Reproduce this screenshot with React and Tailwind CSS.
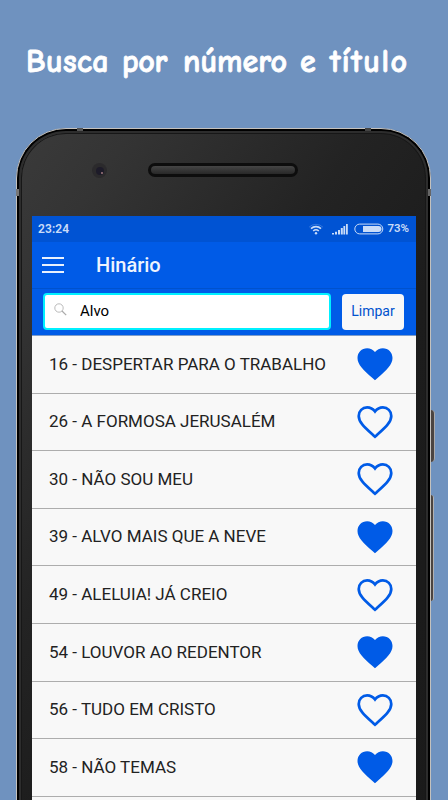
import React, { useState } from "react";
import { MdFavorite } from "react-icons/md";

const hymns = [
    { number: 16, title: "DESPERTAR PARA O TRABALHO", favorite: true },
    { number: 26, title: "A FORMOSA JERUSALÉM", favorite: false },
    { number: 30, title: "NÃO SOU MEU", favorite: false },
    { number: 39, title: "ALVO MAIS QUE A NEVE", favorite: true },
    { number: 49, title: "ALELUIA! JÁ CREIO", favorite: false },
    { number: 54, title: "LOUVOR AO REDENTOR", favorite: true },
    { number: 56, title: "TUDO EM CRISTO", favorite: false },
    { number: 58, title: "NÃO TEMAS", favorite: true },
]

function HeartOutline() {
    return (
        <svg className="h-[42px] w-[42px]" viewBox="0 0 24 24" fill="none" stroke="#005be7" strokeWidth="1.55">
            <path d="M12 20.420l-1.300-1.170C6.050 15.030 2.700 12.100 2.700 8.500c0-2.700 2.100-4.800 4.800-4.800 1.740 0 3.410.9 4.500 2.300 1.090-1.400 2.760-2.300 4.500-2.300 2.700 0 4.800 2.100 4.800 4.800 0 3.600-3.350 6.530-8 10.750z" />
        </svg>
    )
}

function StatusBar() {
    return (
        <div className="flex h-[26px] items-center bg-[#0053d3] pl-[6px] pr-[7px] text-[#c9dcf8]">
            <span className="text-[12px] font-semibold tracking-[0.1px]">23:24</span>
            <svg className="ml-auto" width="16" height="12" viewBox="0 0 16 12" fill="none" stroke="currentColor">
                <path d="M1 4.2a10 10 0 0 1 14 0" strokeWidth="1" opacity="0.25" />
                <path d="M3 5.6a7.3 7.3 0 0 1 10 0" strokeWidth="1.6" />
                <path d="M5.2 8a4.2 4.2 0 0 1 5.6 0" strokeWidth="1.6" />
                <circle cx="8" cy="10.3" r="1.2" fill="currentColor" stroke="none" />
            </svg>
            <svg className="ml-[8px]" width="16" height="12" viewBox="0 0 16 12" fill="currentColor">
                <path d="M0 10h2v1.5H0zM3 8.7h2v2.8H3zM6 7h2v4.5H6zM8.8 5h2v6.5h-2zM11.4 3h1.8v8.5h-1.8zM14 1h1.8v10.5H14z" />
            </svg>
            <svg className="ml-[6px]" width="30" height="12" viewBox="0 0 30 12" fill="none" stroke="currentColor">
                <rect x="0.8" y="1.1" width="28" height="9.8" rx="4.9" strokeWidth="1" />
                <path d="M9 3h15.500a3 3 0 0 1 0 6H9z" fill="currentColor" stroke="none" />
            </svg>
            <span className="ml-[3px] text-[11.500px] font-semibold">73%</span>
        </div>
    )
}

function App() {

    const [ search, setSearch ] = useState("Alvo");

    return (
        <main className="h-[800px] w-[448px] overflow-hidden bg-[#6f92bf]">
            <h1 className="flex h-[128px] gap-[15px] whitespace-nowrap pl-[26px] pt-[38px] font-['Comic_Sans_MS','Comic_Neue','Open_Sans',sans-serif] text-[32px] font-bold leading-[48px] text-white [-webkit-text-stroke:0.8px_white]">
                <span className="w-[81px] tracking-[0.4px]">Busca</span>
                <span className="w-[46px] tracking-[-0.4px]">por</span>
                <span className="w-[102px] tracking-[0px]">número</span>
                <span className="w-[15px]">e</span>
                <span className="w-[78px] tracking-[1.5px]">título</span>
            </h1>

            <div className="relative ml-[16px] h-[740px] w-[415px] rounded-[50px] border-[1.5px] border-[#c4c1bd] bg-black p-[2px] font-['Roboto',sans-serif]">
                <div className="absolute left-[414px] top-[281px] h-[52px] w-[4px] rounded-r-sm border-r border-[#aaa9aa] bg-[#4b4441]" />
                <div className="absolute left-[414px] top-[366px] h-[106px] w-[3px] rounded-r-sm border-r border-[#b3b1b1] bg-[#4b4441]" />
                <div className="absolute left-[60px] top-[-1px] h-[3px] w-[6px] bg-[#555]" />
                <div className="absolute left-[348px] top-[-1px] h-[3px] w-[6px] bg-[#444]" />
                <div className="absolute left-[-1px] top-[60px] h-[7px] w-[3px] bg-[#777]" />
                <div className="absolute left-[411px] top-[60px] h-[7px] w-[3px] bg-[#666]" />

                <div className="h-full rounded-[47px] border-2 border-[#2d2d2d] bg-[linear-gradient(125deg,#3a3a3a_0px,#343434_90px,#232323_280px,#1c1c1c_420px,#1a1a1a_100%)] px-[11px] shadow-[inset_0_0_0_1px_#171717]">
                    <div className="flex h-[83px] pt-[29px]">
                        <div className="ml-[60px] mt-[1px] flex h-[15px] w-[15px] items-center justify-center rounded-full bg-[#2b2a2c]">
                            <div className="flex h-[8px] w-[8px] items-end justify-end rounded-full bg-[#1d1b29] p-px">
                                <div className="h-[2px] w-[2px] rounded-full bg-[#a0787e]" />
                            </div>
                        </div>
                        <div className="ml-[41px] mt-[1px] h-[14px] w-[150px] rounded-full border-[3px] border-[#0d0d0d] bg-[linear-gradient(#454545,#282828)]" />
                    </div>

                    <div className="h-[655px] w-[384px] bg-[#f8f8f8]">
                        <StatusBar />
                        <header className="flex h-[47px] items-center border-b border-[#0052cd] bg-[#005be7] pl-[10px]">
                            <div className="flex w-[22px] flex-col gap-[5px]">
                                <div className="h-[2px] bg-[#e9f1fd]" />
                                <div className="h-[2px] bg-[#e9f1fd]" />
                                <div className="h-[2px] bg-[#e9f1fd]" />
                            </div>
                            <h2 className="ml-[32px] text-[20px] font-medium leading-none text-[#eef4fe]">Hinário</h2>
                        </header>

                        <div className="flex h-[47px] border-b border-[#7e9cc9] bg-[#005be7] pl-[11px] pt-[4px]">
                            <div className="flex h-[37px] w-[288px] items-center rounded-[4px] border-2 border-[#00f0ff] bg-white pl-[9px]">
                                <svg className="mb-[4px]" width="13" height="13" viewBox="0 0 13 13" fill="none" stroke="#aaa">
                                    <circle cx="5" cy="5" r="4.200" strokeWidth="0.8" />
                                    <path d="M8 8l4.200 4.200" strokeWidth="1.2" />
                                </svg>
                                <input className="ml-[13px] w-[200px] text-[15px] text-black outline-none" value={search} onChange={(e => setSearch(e.target.value))} />
                            </div>
                            <button className="ml-[11px] mt-px h-[36px] w-[62px] rounded-[4px] bg-[#f8f8f8] pb-[2px] text-[14px] text-[#0052ce]" onClick={() => setSearch("")}>Limpar</button>
                        </div>

                        <ul>
                            {hymns.map((hymn) => (
                                <li key={hymn.number} className="flex h-[57.600px] items-center justify-between border-b border-[#adadad] pl-[17px] pr-[20px] text-[17px] text-[#222]">
                                    <span>{hymn.number} - {hymn.title}</span>
                                    {hymn.favorite ? <MdFavorite className="h-[42px] w-[42px] text-[#005be7]" /> : <HeartOutline />}
                                </li>
                            ))}
                        </ul>
                    </div>
                </div>
            </div>
        </main>
    )
}

export default App;
